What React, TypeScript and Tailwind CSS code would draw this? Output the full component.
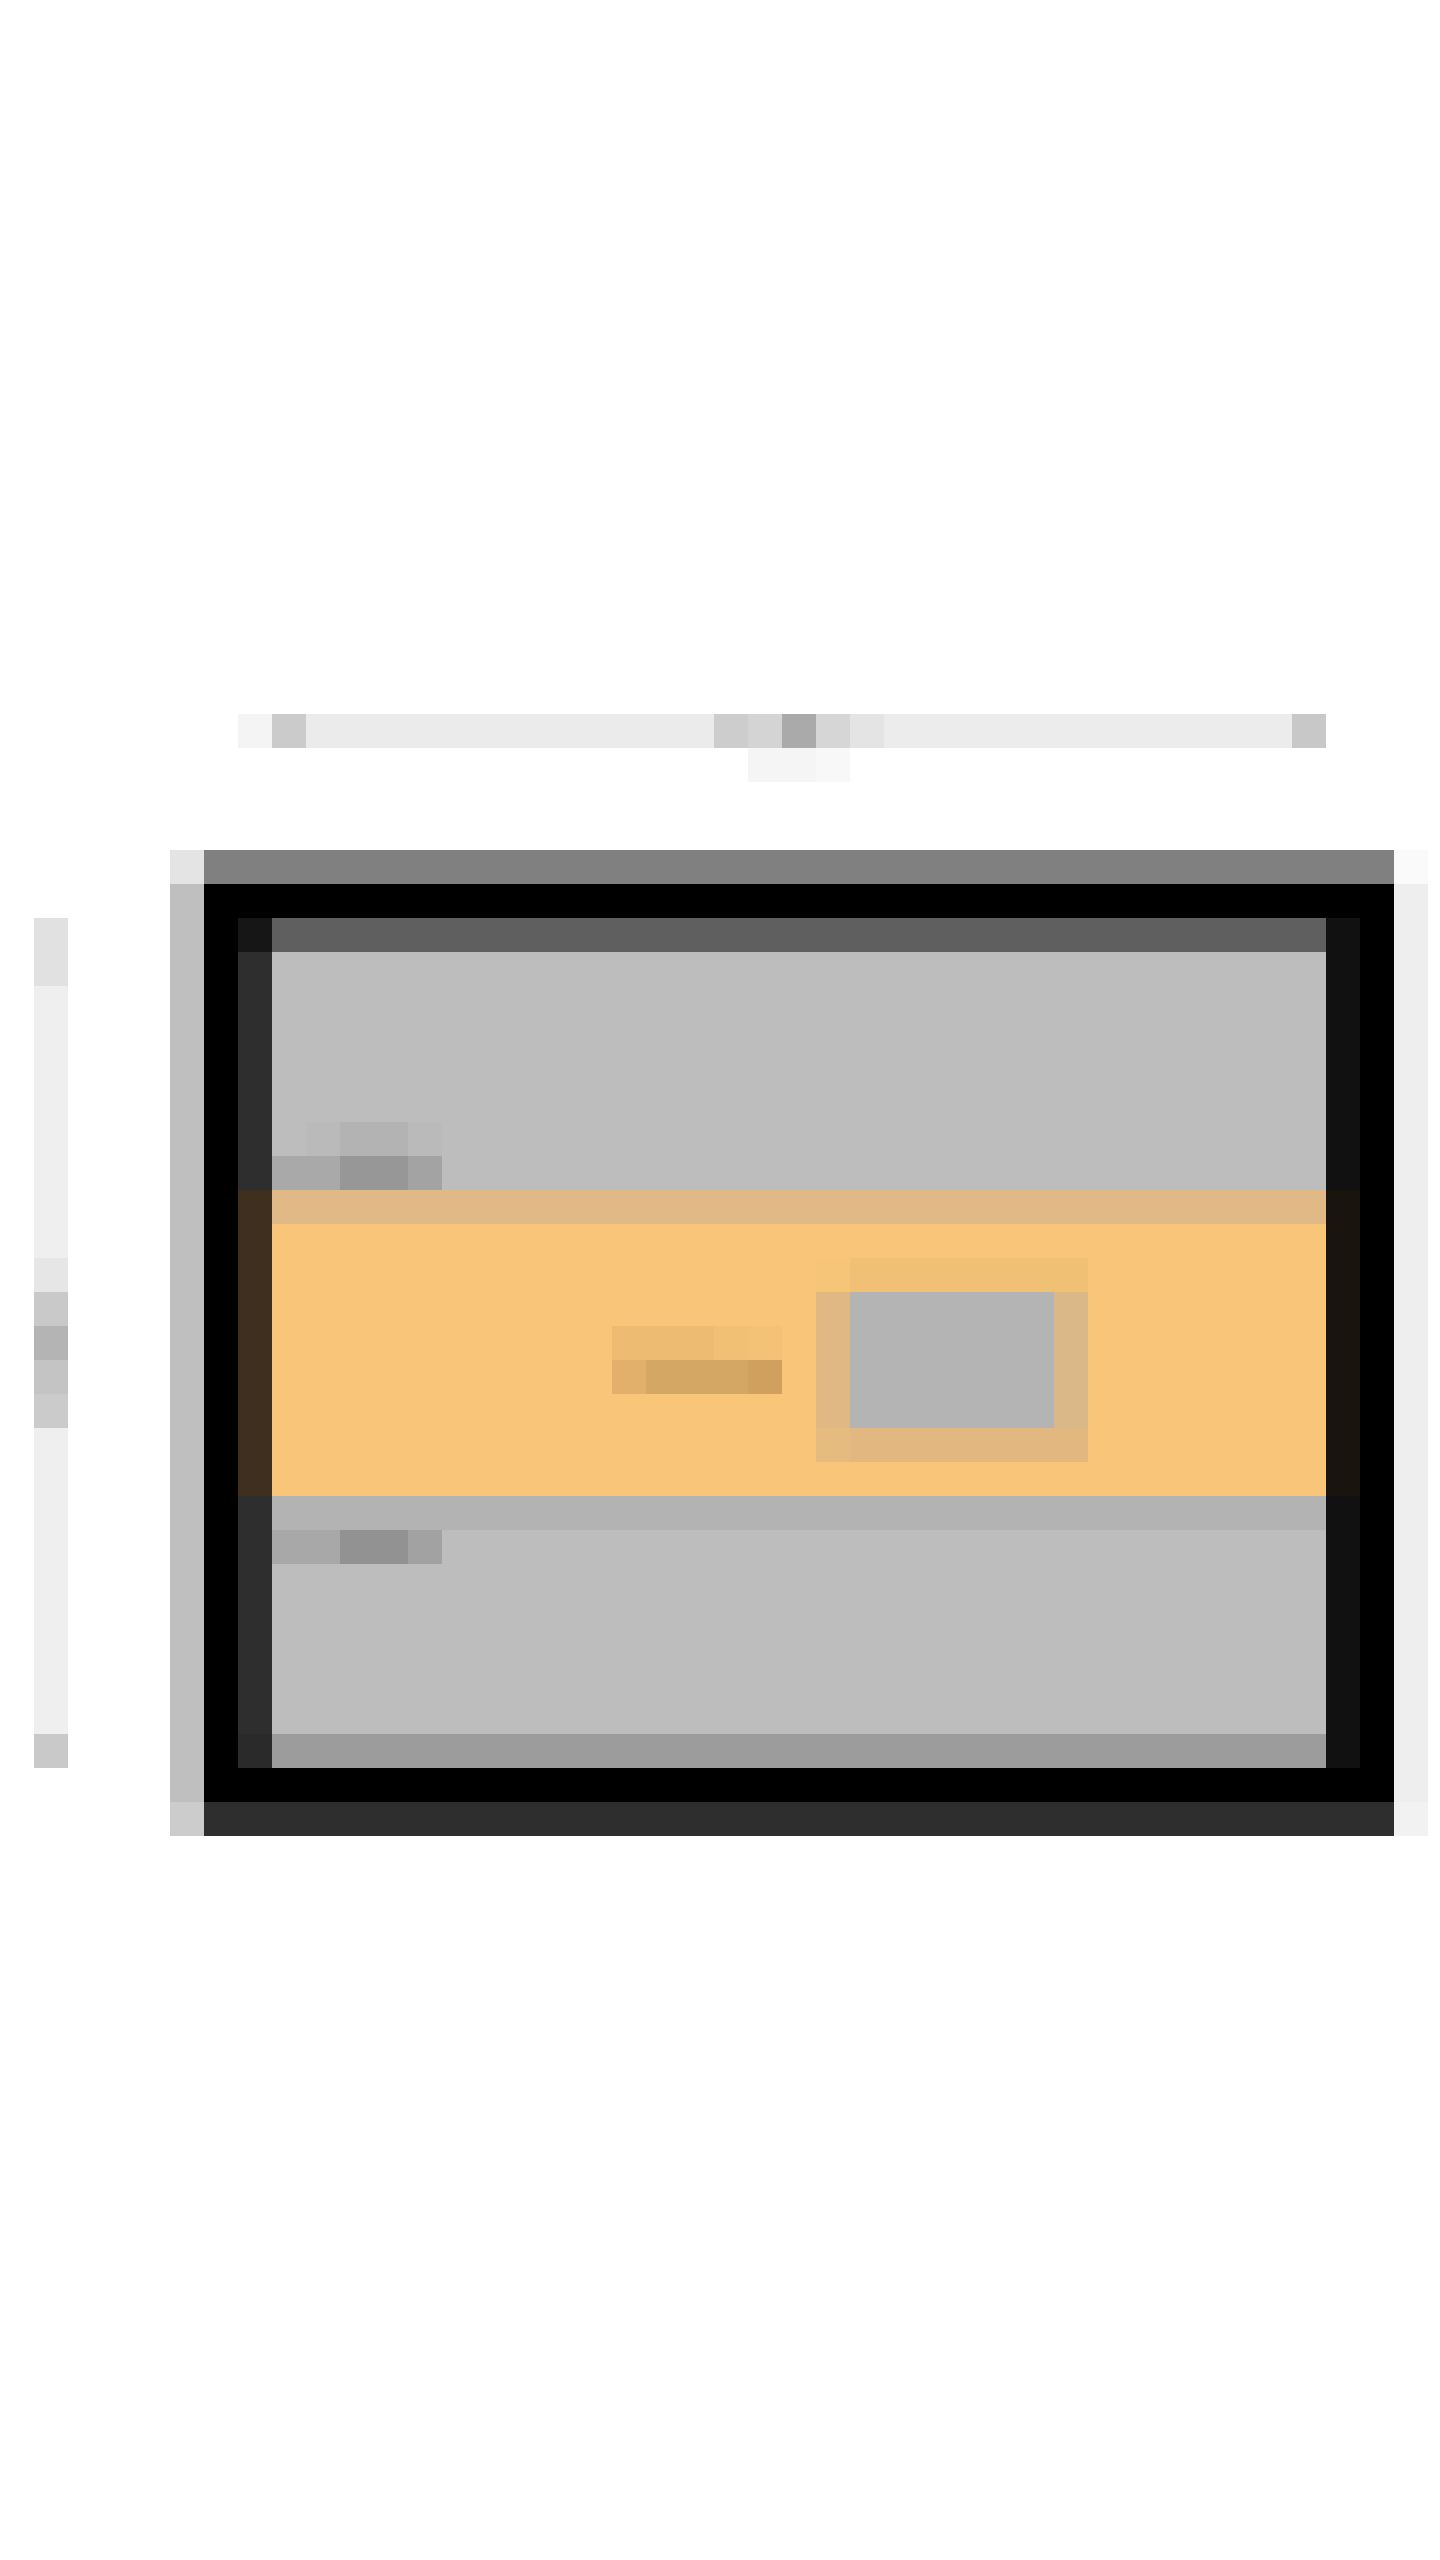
import React from "react";

function Cell({ c, w = "w-[34px]" }: { c: string; w?: string }) {
  return <div className={`${w} h-[34px] shrink-0 ${c}`} />;
}

function TopRuler() {
  return (
    <div className="ml-[68px] flex h-[34px]">
      <Cell c="bg-[#f4f4f4]" />
      <Cell c="bg-[#cbcbcb]" />
      <Cell c="bg-[#ebebeb]" w="w-[408px]" />
      <Cell c="bg-[#cdcdcd]" />
      <Cell c="bg-[#d4d4d4]" />
      <Cell c="bg-[#aaaaaa]" />
      <Cell c="bg-[#d6d6d6]" />
      <Cell c="bg-[#e4e4e4]" />
      <Cell c="bg-[#ececec]" w="w-[408px]" />
      <Cell c="bg-[#c8c8c8]" />
    </div>
  );
}

function SideRuler() {
  return (
    <div className="ml-[34px] mt-[918px] flex w-[34px] shrink-0 flex-col">
      <div className="h-[68px] bg-[#e1e1e1]" />
      <div className="h-[272px] bg-[#efefef]" />
      <div className="h-[34px] bg-[#e6e6e6]" />
      <div className="h-[34px] bg-[#c9c9c9]" />
      <div className="h-[34px] bg-[#b4b4b4]" />
      <div className="h-[34px] bg-[#c4c4c4]" />
      <div className="h-[34px] bg-[#cbcbcb]" />
      <div className="h-[306px] bg-[#efefef]" />
      <div className="h-[34px] bg-[#c9c9c9]" />
    </div>
  );
}

function Label({ top }: { top: boolean }) {
  if (top) {
    return (
      <div className="flex flex-col">
        <div className="flex h-[34px]">
          <Cell c="bg-transparent" />
          <Cell c="bg-[#bababa]" />
          <Cell c="bg-[#b3b3b3]" w="w-[68px]" />
          <Cell c="bg-[#bababa]" />
        </div>
        <div className="flex h-[34px]">
          <Cell c="bg-[#a9a9a9]" w="w-[68px]" />
          <Cell c="bg-[#979797]" w="w-[68px]" />
          <Cell c="bg-[#a3a3a3]" />
        </div>
      </div>
    );
  }
  return (
    <div className="flex h-[34px]">
      <Cell c="bg-[#a8a8a8]" w="w-[68px]" />
      <Cell c="bg-[#929292]" w="w-[68px]" />
      <Cell c="bg-[#a2a2a2]" />
    </div>
  );
}

function Banner() {
  return (
    <div className="flex h-[272px] items-start bg-[#f9c679] pl-[340px]">
      <div className="mt-[102px] flex flex-col">
        <div className="flex h-[34px]">
          <Cell c="bg-[#eebb72]" w="w-[102px]" />
          <Cell c="bg-[#f1c075]" />
          <Cell c="bg-[#f4c277]" />
        </div>
        <div className="flex h-[34px]">
          <Cell c="bg-[#e2b06a]" />
          <Cell c="bg-[#d5a764]" w="w-[102px]" />
          <Cell c="bg-[#cfa05e]" />
        </div>
      </div>
      <div className="ml-[34px] mt-[34px] flex w-[272px] flex-col">
        <div className="flex h-[34px]">
          <Cell c="bg-[#f6c578]" />
          <Cell c="bg-[#f0c074]" w="w-[238px]" />
        </div>
        <div className="flex h-[136px]">
          <div className="w-[34px] bg-[#dfb883]" />
          <div className="w-[204px] bg-[#b4b4b4]" />
          <div className="w-[34px] bg-[#dab888]" />
        </div>
        <div className="flex h-[34px]">
          <Cell c="bg-[#e6bb80]" />
          <Cell c="bg-[#e2b880]" w="w-[238px]" />
        </div>
      </div>
    </div>
  );
}

function Screen() {
  return (
    <div className="flex h-[850px] flex-col">
      <div className="flex h-[34px]">
        <Cell c="bg-[#161616]" />
        <div className="h-[34px] flex-1 bg-[#5f5f5f]" />
        <Cell c="bg-[#111111]" />
      </div>
      <div className="flex h-[782px]">
        <div className="flex w-[34px] flex-col">
          <div className="h-[238px] bg-[#2e2e2e]" />
          <div className="h-[306px] bg-[#3e2f1e]" />
          <div className="h-[238px] bg-[#2e2e2e]" />
        </div>
        <div className="flex w-[1054px] flex-col">
          <div className="flex h-[238px] flex-col justify-end bg-[#bdbdbd]">
            <Label top />
          </div>
          <div className="h-[34px] bg-[#e0b986]" />
          <Banner />
          <div className="h-[34px] bg-[#b3b3b3]" />
          <div className="flex h-[204px] flex-col bg-[#bdbdbd]">
            <Label top={false} />
          </div>
        </div>
        <div className="flex w-[34px] flex-col">
          <div className="h-[238px] bg-[#111111]" />
          <div className="h-[306px] bg-[#1a140e]" />
          <div className="h-[238px] bg-[#111111]" />
        </div>
      </div>
      <div className="flex h-[34px]">
        <Cell c="bg-[#2a2a2a]" />
        <div className="h-[34px] flex-1 bg-[#9c9c9c]" />
        <Cell c="bg-[#111111]" />
      </div>
    </div>
  );
}

function Device() {
  return (
    <div className="flex w-[1258px] flex-col">
      <div className="flex h-[34px]">
        <Cell c="bg-[#e4e4e4]" />
        <div className="h-[34px] flex-1 bg-[#808080]" />
        <Cell c="bg-[#fafafa]" />
      </div>
      <div className="flex h-[918px]">
        <div className="w-[34px] bg-[#bfbfbf]" />
        <div className="flex-1 bg-black p-[34px]">
          <Screen />
        </div>
        <div className="w-[34px] bg-[#eeeeee]" />
      </div>
      <div className="flex h-[34px]">
        <Cell c="bg-[#cccccc]" />
        <div className="h-[34px] flex-1 bg-[#2e2e2e]" />
        <Cell c="bg-[#f2f2f2]" />
      </div>
    </div>
  );
}

export default function App() {
  return (
    <div className="flex h-[2560px] w-[1440px] items-start overflow-hidden bg-white">
      <SideRuler />
      <div className="ml-[102px] mt-[714px] flex flex-col">
        <TopRuler />
        <div className="ml-[578px] flex h-[34px]">
          <Cell c="bg-[#f5f5f5]" w="w-[68px]" />
          <Cell c="bg-[#f8f8f8]" />
        </div>
        <div className="h-[68px]" />
        <Device />
      </div>
    </div>
  );
}
